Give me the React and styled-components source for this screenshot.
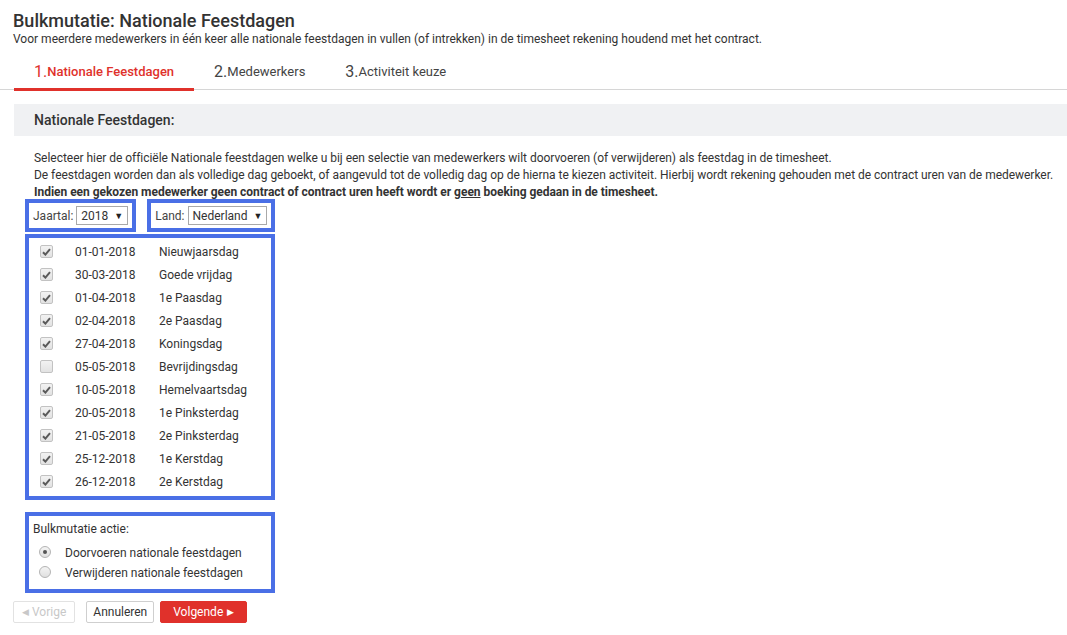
import React from 'react';
import styled, { createGlobalStyle } from 'styled-components';

const GlobalStyle = createGlobalStyle`
  body {
    margin: 0;
    background: #fff;
    font-family: Roboto, "Liberation Sans", Arial, sans-serif;
    color: #333;
  }
`;

const Page = styled.div`
  width: 1067px;
  min-height: 635px;
  overflow: hidden;
`;

const Header = styled.div`
  padding: 10px 0 0 13px;
`;

const Title = styled.h1`
  margin: 0;
  font-size: 18px;
  font-weight: 500;
  line-height: 22px;
  color: #333;
`;

const Subtitle = styled.div`
  font-size: 12px;
  line-height: 15px;
  color: #333;
`;

const Tabs = styled.div`
  display: flex;
  margin-top: 7px;
  padding-left: 14px;
  border-bottom: 1px solid #d6d6d6;
`;

const Tab = styled.div`
  padding: 0 20px;
  height: 34px;
  display: flex;
  align-items: center;
  font-size: 13px;
  color: ${p => (p.$active ? '#e0312b' : '#444')};
  font-weight: ${p => (p.$active ? 500 : 400)};
  border-bottom: 3px solid ${p => (p.$active ? '#e0312b' : 'transparent')};
  margin-bottom: -2px;
`;

const TabNum = styled.span`
  font-size: 16px;
  font-weight: 400;
`;

const Content = styled.div`
  padding: 14px 0 0 14px;
`;

const SectionHead = styled.div`
  background: #f0f1f3;
  height: 32px;
  display: flex;
  align-items: center;
  padding-left: 20px;
  font-size: 14px;
  font-weight: 500;
  color: #333;
`;

const Intro = styled.div`
  padding: 14px 0 0 20px;
  font-size: 12px;
  line-height: 17px;
  letter-spacing: -0.03px;
  color: #333;
`;

const Strong = styled.div`
  font-weight: 700;
`;

const Underline = styled.span`
  text-decoration: underline;
`;

const Body = styled.div`
  padding-left: 11px;
`;

const Filters = styled.div`
  display: flex;
  gap: 11px;
  margin-top: -2px;
`;

const Marked = styled.div`
  border: 4px solid #4a6fe6;
  padding: ${p => p.$pad || '0 4px'};
  width: ${p => (p.$w ? p.$w + 'px' : 'auto')};
  box-sizing: border-box;
  margin-top: ${p => (p.$mt || 0)}px;
`;

const FilterInner = styled.div`
  display: flex;
  align-items: center;
  height: 25px;
  gap: 3px;
  font-size: 12px;
  color: #444;
`;

const Select = styled.div`
  display: flex;
  align-items: center;
  justify-content: space-between;
  height: 19px;
  box-sizing: border-box;
  border: 1px solid #a9a9a9;
  padding: 0 4px 0 4px;
  gap: 6px;
  font-size: 12px;
  color: #333;
  background: #fff;
`;

const Caret = styled.span`
  font-size: 9px;
  color: #222;
`;

const List = styled.div`
  padding: 2px 0 3px 11px;
`;

const Row = styled.div`
  display: flex;
  align-items: center;
  height: 23px;
  font-size: 12px;
  color: #333;
`;

const Check = styled.span`
  width: 13px;
  height: 13px;
  box-sizing: border-box;
  border: 1px solid #c2c2c2;
  border-radius: 2px;
  background: linear-gradient(#f2f2f2, #e2e2e2);
  display: flex;
  align-items: center;
  justify-content: center;
  margin-right: 22px;
`;

const DateCell = styled.span`
  width: 84px;
`;

const ActionTitle = styled.div`
  font-size: 12px;
  line-height: 15px;
  padding-top: 6px;
  color: #333;
`;

const RadioGroup = styled.div`
  padding-top: 6px;
`;

const RadioRow = styled.div`
  display: flex;
  align-items: center;
  height: 20px;
  font-size: 12px;
  padding-left: 6px;
  color: #333;
`;

const Radio = styled.span`
  width: 12px;
  height: 12px;
  box-sizing: border-box;
  border-radius: 50%;
  border: 1px solid #b4b4b4;
  background: linear-gradient(#f4f4f4, #e0e0e0);
  display: flex;
  align-items: center;
  justify-content: center;
  margin-right: 14px;
  margin-top: -2px;
`;

const Dot = styled.span`
  width: 4px;
  height: 4px;
  border-radius: 50%;
  background: #555;
`;

const Buttons = styled.div`
  display: flex;
  padding: 8px 0 0 13px;
`;

const Button = styled.div`
  height: 22px;
  box-sizing: border-box;
  display: flex;
  align-items: center;
  padding: 0 ${p => p.$px || 8}px;
  font-size: 12px;
  border-radius: 2px;
  border: 1px solid ${p => (p.$primary ? '#e0312b' : p.$disabled ? '#e2e2e2' : '#cfcfcf')};
  background: ${p => (p.$primary ? '#e0312b' : '#fff')};
  color: ${p => (p.$primary ? '#fff' : p.$disabled ? '#c8c8c8' : '#333')};
  margin-right: ${p => (p.$mr || 0)}px;
`;

const Arrow = styled.span`
  font-size: 9px;
  margin: 0 ${p => (p.$right ? 0 : 3)}px 0 ${p => (p.$right ? 4 : 0)}px;
`;

const holidays = [
  ['01-01-2018', 'Nieuwjaarsdag', true],
  ['30-03-2018', 'Goede vrijdag', true],
  ['01-04-2018', '1e Paasdag', true],
  ['02-04-2018', '2e Paasdag', true],
  ['27-04-2018', 'Koningsdag', true],
  ['05-05-2018', 'Bevrijdingsdag', false],
  ['10-05-2018', 'Hemelvaartsdag', true],
  ['20-05-2018', '1e Pinksterdag', true],
  ['21-05-2018', '2e Pinksterdag', true],
  ['25-12-2018', '1e Kerstdag', true],
  ['26-12-2018', '2e Kerstdag', true],
];

const Tick = () => (
  <svg width="9" height="8" viewBox="0 0 9 8">
    <path d="M1 4.2 L3.4 6.6 L8 1.2" fill="none" stroke="#5a5a5a" strokeWidth="2" />
  </svg>
);

export default function App() {
  return (
    <Page>
      <GlobalStyle />
      <Header>
        <Title>Bulkmutatie: Nationale Feestdagen</Title>
        <Subtitle>
          Voor meerdere medewerkers in één keer alle nationale feestdagen in vullen (of intrekken) in de timesheet rekening houdend met het contract.
        </Subtitle>
      </Header>
      <Tabs>
        <Tab $active><TabNum>1.</TabNum>Nationale Feestdagen</Tab>
        <Tab><TabNum>2.</TabNum>Medewerkers</Tab>
        <Tab><TabNum>3.</TabNum>Activiteit keuze</Tab>
      </Tabs>
      <Content>
        <SectionHead>Nationale Feestdagen:</SectionHead>
        <Intro>
          <div>Selecteer hier de officiële Nationale feestdagen welke u bij een selectie van medewerkers wilt doorvoeren (of verwijderen) als feestdag in de timesheet.</div>
          <div>De feestdagen worden dan als volledige dag geboekt, of aangevuld tot de volledig dag op de hierna te kiezen activiteit. Hierbij wordt rekening gehouden met de contract uren van de medewerker.</div>
          <Strong>Indien een gekozen medewerker geen contract of contract uren heeft wordt er <Underline>geen</Underline> boeking gedaan in de timesheet.</Strong>
        </Intro>
        <Body>
          <Filters>
            <Marked>
              <FilterInner>
                Jaartal: <Select>2018 <Caret>▼</Caret></Select>
              </FilterInner>
            </Marked>
            <Marked>
              <FilterInner>
                Land: <Select>Nederland <Caret>▼</Caret></Select>
              </FilterInner>
            </Marked>
          </Filters>
          <Marked $w={250} $pad="0" $mt={2}>
            <List>
              {holidays.map(([d, n, c]) => (
                <Row key={d}>
                  <Check>{c && <Tick />}</Check>
                  <DateCell>{d}</DateCell>
                  <span>{n}</span>
                </Row>
              ))}
            </List>
          </Marked>
          <Marked $w={250} $pad="0 4px 6px 4px" $mt={12}>
            <ActionTitle>Bulkmutatie actie:</ActionTitle>
            <RadioGroup>
              <RadioRow><Radio><Dot /></Radio>Doorvoeren nationale feestdagen</RadioRow>
              <RadioRow><Radio />Verwijderen nationale feestdagen</RadioRow>
            </RadioGroup>
          </Marked>
        </Body>
      </Content>
      <Buttons>
        <Button $disabled $px={8} $mr={11}><Arrow>◀</Arrow>Vorige</Button>
        <Button $px={6} $mr={6}>Annuleren</Button>
        <Button $primary $px={12}>Volgende<Arrow $right>▶</Arrow></Button>
      </Buttons>
    </Page>
  );
}
